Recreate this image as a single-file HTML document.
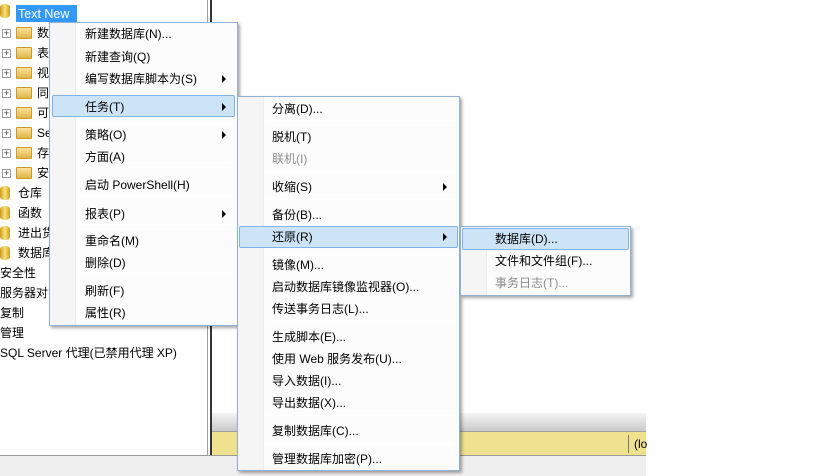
<!DOCTYPE html>
<html><head><meta charset="utf-8"><style>
*{margin:0;padding:0;box-sizing:border-box}
body{width:819px;height:476px;position:relative;overflow:hidden;background:#fff;font-family:"Liberation Sans","Noto Sans CJK SC",sans-serif;font-size:12px;color:#000}
.a{position:absolute;white-space:nowrap}
.t{position:absolute;white-space:nowrap;line-height:14px}
.menu{position:absolute;background:#fcfcfc;border:1px solid #8fb1d6;box-shadow:2px 2px 3px rgba(0,0,0,.35)}
.menu .g{position:absolute;left:0;top:0;bottom:0;width:26px;background:#f5f5f5;border-right:1px solid #ececec}
.sep{position:absolute;height:1px;background:#d7d7d7;border-bottom:1px solid #fff}
.hl{position:absolute;height:22px;background:#cde4f7;border:1px solid #7eb4ea;border-radius:2px}
.arr{position:absolute;width:0;height:0;border-left:4px solid #000;border-top:4px solid transparent;border-bottom:4px solid transparent}
.dis{color:#8d8d8d}
.fold{position:absolute;width:16px;height:12px;background:linear-gradient(#f8e19a,#e0b548);border:1px solid #c79b2e;border-radius:1px}
.pl{position:absolute;width:9px;height:9px;border:1px solid #9a9a9a;background:#fff;font-size:9px;line-height:7px;text-align:center;color:#333}
.db{position:absolute;width:10px;height:14px;background:linear-gradient(90deg,#c99a1e,#fbe27a,#c99a1e);border-radius:5px/3px}
</style></head><body>
<div class="a" style="left:207px;top:0;width:1px;height:456px;background:#a0a0a0"></div>
<div class="a" style="left:210px;top:0;width:2px;height:456px;background:#333"></div>
<div class="a" style="left:0;top:455px;width:646px;height:1px;background:#9a9a9a"></div>
<div class="a" style="left:0;top:456px;width:646px;height:20px;background:#f0efef"></div>
<div class="a" style="left:212px;top:413px;width:434px;height:18px;background:linear-gradient(#f4f4f4,#c9c9c9)"></div>
<div class="a" style="left:212px;top:431px;width:434px;height:1px;background:#a0a0a0"></div>
<div class="a" style="left:212px;top:432px;width:434px;height:23px;background:#efe28f"></div>
<div class="a" style="left:628px;top:435px;width:1px;height:18px;background:#777"></div>
<div class="t" style="left:634px;top:437px">(lo</div>

<div class="db" style="left:0;top:4px"></div>
<div class="a" style="left:16px;top:5px;width:61px;height:17px;background:#3399ff"></div>
<div class="t" style="left:18px;top:7px;color:#fff;font-size:12.5px">Text New</div>
<div class="pl" style="left:2px;top:29px">+</div><div class="fold" style="left:16px;top:27px"></div><div class="t" style="left:37px;top:26px">数</div>
<div class="pl" style="left:2px;top:49px">+</div><div class="fold" style="left:16px;top:47px"></div><div class="t" style="left:37px;top:46px">表</div>
<div class="pl" style="left:2px;top:69px">+</div><div class="fold" style="left:16px;top:67px"></div><div class="t" style="left:37px;top:66px">视</div>
<div class="pl" style="left:2px;top:89px">+</div><div class="fold" style="left:16px;top:87px"></div><div class="t" style="left:37px;top:86px">同</div>
<div class="pl" style="left:2px;top:109px">+</div><div class="fold" style="left:16px;top:107px"></div><div class="t" style="left:37px;top:106px">可</div>
<div class="pl" style="left:2px;top:129px">+</div><div class="fold" style="left:16px;top:127px"></div><div class="t" style="left:37px;top:126px">Se</div>
<div class="pl" style="left:2px;top:149px">+</div><div class="fold" style="left:16px;top:147px"></div><div class="t" style="left:37px;top:146px">存</div>
<div class="pl" style="left:2px;top:169px">+</div><div class="fold" style="left:16px;top:167px"></div><div class="t" style="left:37px;top:166px">安</div>
<div class="db" style="left:0;top:186px"></div><div class="t" style="left:18px;top:186px">仓库</div>
<div class="db" style="left:0;top:206px"></div><div class="t" style="left:18px;top:206px">函数</div>
<div class="db" style="left:0;top:226px"></div><div class="t" style="left:18px;top:226px">进出货</div>
<div class="db" style="left:0;top:246px"></div><div class="t" style="left:18px;top:246px">数据库</div>
<div class="t" style="left:0;top:266px">安全性</div>
<div class="t" style="left:0;top:286px">服务器对象</div>
<div class="t" style="left:0;top:306px">复制</div>
<div class="t" style="left:0;top:326px">管理</div>
<div class="t" style="left:0;top:346px">SQL Server 代理(已禁用代理 XP)</div>

<div class="menu" style="left:49px;top:22px;width:189px;height:304px">
<div class="g"></div>
<div class="t" style="left:35px;top:4px">新建数据库(N)...</div>
<div class="t" style="left:35px;top:27px">新建查询(Q)</div>
<div class="t" style="left:35px;top:49px">编写数据库脚本为(S)</div><div class="arr" style="left:172px;top:52px"></div>
<div class="sep" style="left:29px;top:66px;width:155px"></div>
<div class="hl" style="left:2px;top:72px;width:183px"></div>
<div class="t" style="left:35px;top:77px">任务(T)</div><div class="arr" style="left:172px;top:80px"></div>
<div class="sep" style="left:29px;top:100px;width:155px"></div>
<div class="t" style="left:35px;top:105px">策略(O)</div><div class="arr" style="left:172px;top:108px"></div>
<div class="t" style="left:35px;top:127px">方面(A)</div>
<div class="sep" style="left:29px;top:144px;width:155px"></div>
<div class="t" style="left:35px;top:155px">启动 PowerShell(H)</div>
<div class="sep" style="left:29px;top:172px;width:155px"></div>
<div class="t" style="left:35px;top:184px">报表(P)</div><div class="arr" style="left:172px;top:187px"></div>
<div class="sep" style="left:29px;top:201px;width:155px"></div>
<div class="t" style="left:35px;top:211px">重命名(M)</div>
<div class="t" style="left:35px;top:233px">删除(D)</div>
<div class="sep" style="left:29px;top:250px;width:155px"></div>
<div class="t" style="left:35px;top:261px">刷新(F)</div>
<div class="t" style="left:35px;top:283px">属性(R)</div>
</div>

<div class="menu" style="left:237px;top:96px;width:223px;height:375px">
<div class="g"></div>
<div class="t" style="left:34px;top:5px">分离(D)...</div>
<div class="sep" style="left:29px;top:23px;width:189px"></div>
<div class="t" style="left:34px;top:33px">脱机(T)</div>
<div class="t dis" style="left:34px;top:55px">联机(I)</div>
<div class="sep" style="left:29px;top:74px;width:189px"></div>
<div class="t" style="left:34px;top:83px">收缩(S)</div><div class="arr" style="left:205px;top:86px"></div>
<div class="sep" style="left:29px;top:102px;width:189px"></div>
<div class="t" style="left:34px;top:111px">备份(B)...</div>
<div class="hl" style="left:1px;top:129px;width:219px"></div>
<div class="t" style="left:34px;top:133px">还原(R)</div><div class="arr" style="left:205px;top:136px"></div>
<div class="sep" style="left:29px;top:157px;width:189px"></div>
<div class="t" style="left:34px;top:161px">镜像(M)...</div>
<div class="t" style="left:34px;top:183px">启动数据库镜像监视器(O)...</div>
<div class="t" style="left:34px;top:205px">传送事务日志(L)...</div>
<div class="sep" style="left:29px;top:224px;width:189px"></div>
<div class="t" style="left:34px;top:233px">生成脚本(E)...</div>
<div class="t" style="left:34px;top:255px">使用 Web 服务发布(U)...</div>
<div class="t" style="left:34px;top:277px">导入数据(I)...</div>
<div class="t" style="left:34px;top:299px">导出数据(X)...</div>
<div class="sep" style="left:29px;top:318px;width:189px"></div>
<div class="t" style="left:34px;top:327px">复制数据库(C)...</div>
<div class="sep" style="left:29px;top:346px;width:189px"></div>
<div class="t" style="left:34px;top:355px">管理数据库加密(P)...</div>
</div>

<div class="menu" style="left:460px;top:226px;width:171px;height:70px">
<div class="g"></div>
<div class="hl" style="left:1px;top:1px;width:167px"></div>
<div class="t" style="left:34px;top:5px">数据库(D)...</div>
<div class="t" style="left:34px;top:27px">文件和文件组(F)...</div>
<div class="t dis" style="left:34px;top:49px">事务日志(T)...</div>
</div>
</body></html>
